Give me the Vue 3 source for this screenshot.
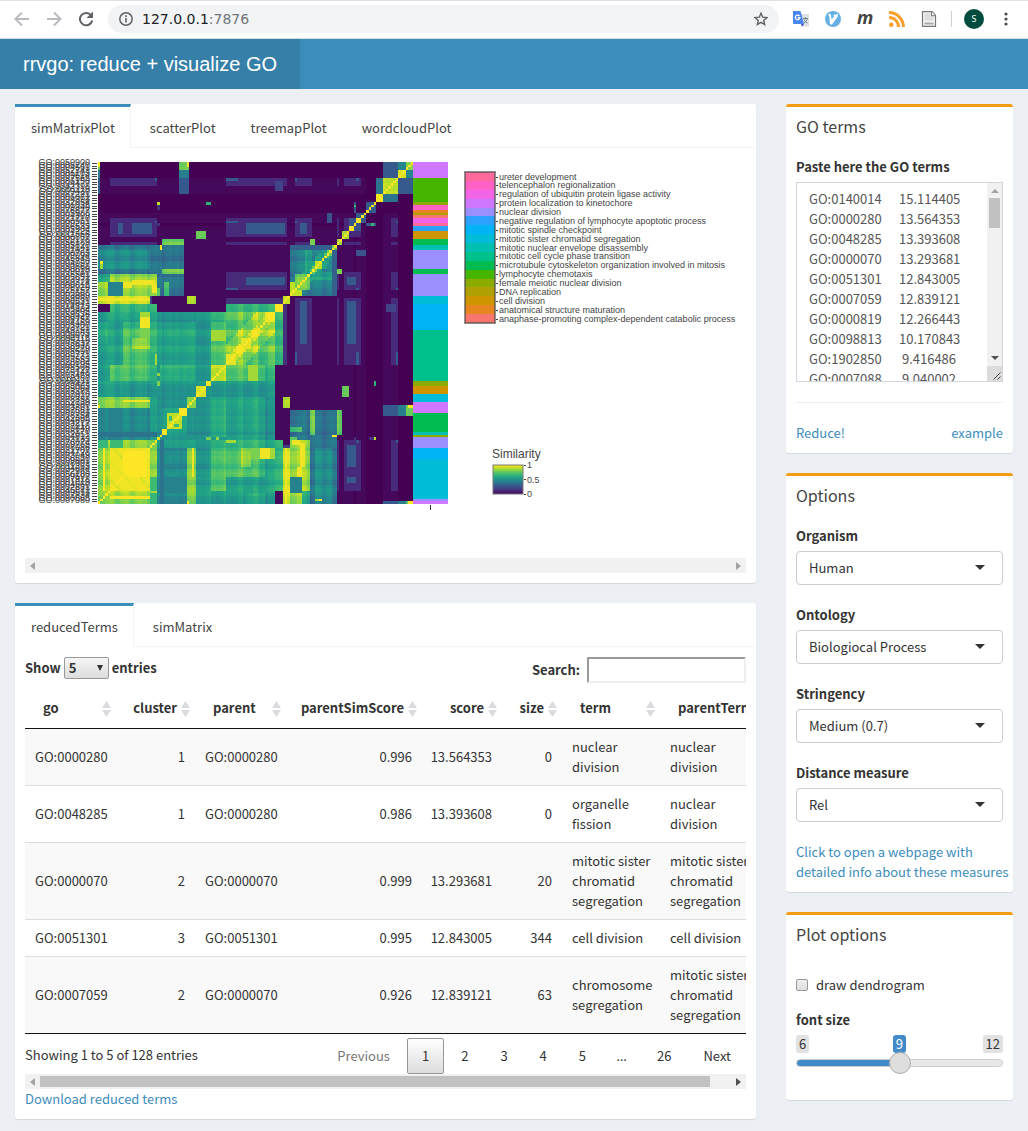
<script setup>
import { ref } from 'vue'

const plotTabs = ['simMatrixPlot', 'scatterPlot', 'treemapPlot', 'wordcloudPlot']
const tableTabs = ['reducedTerms', 'simMatrix']

const goText = ref(
  [
    'GO:0140014\t15.114405',
    'GO:0000280\t13.564353',
    'GO:0048285\t13.393608',
    'GO:0000070\t13.293681',
    'GO:0051301\t12.843005',
    'GO:0007059\t12.839121',
    'GO:0000819\t12.266443',
    'GO:0098813\t10.170843',
    'GO:1902850\t 9.416486',
    'GO:0007088\t 9.040002',
  ].join('\n')
)

const options = [
  { id: 'organism', label: 'Organism', value: 'Human' },
  { id: 'ontology', label: 'Ontology', value: 'Biologiocal Process' },
  { id: 'stringency', label: 'Stringency', value: 'Medium (0.7)' },
  { id: 'distance', label: 'Distance measure', value: 'Rel' },
]

const fontSize = ref(9)
const dendrogram = ref(false)

const columns = [
  { key: 'go', w: 91 },
  { key: 'cluster', w: 79, num: true },
  { key: 'parent', w: 91 },
  { key: 'parentSimScore', w: 136, num: true },
  { key: 'score', w: 80, num: true },
  { key: 'size', w: 60, num: true },
  { key: 'term', w: 98 },
  { key: 'parentTerm', w: 109 },
]
const rows = [
  ['GO:0000280', '1', 'GO:0000280', '0.996', '13.564353', '0', 'nuclear division', 'nuclear division'],
  ['GO:0048285', '1', 'GO:0000280', '0.986', '13.393608', '0', 'organelle fission', 'nuclear division'],
  ['GO:0000070', '2', 'GO:0000070', '0.999', '13.293681', '20', 'mitotic sister chromatid segregation', 'mitotic sister chromatid segregation'],
  ['GO:0051301', '3', 'GO:0051301', '0.995', '12.843005', '344', 'cell division', 'cell division'],
  ['GO:0007059', '2', 'GO:0000070', '0.926', '12.839121', '63', 'chromosome segregation', 'mitotic sister chromatid segregation'],
]
const pages = ['Previous', '1', '2', '3', '4', '5', '…', '26', 'Next']

const legend = [
  ['ureter development', '#ff699c'],
  ['telencephalon regionalization', '#ff61c7'],
  ['regulation of ubiquitin protein ligase activity', '#f265e7'],
  ['protein localization to kinetochore', '#cf78ff'],
  ['nuclear division', '#9b8eff'],
  ['negative regulation of lymphocyte apoptotic process', '#2ca1ff'],
  ['mitotic spindle checkpoint', '#00b3f4'],
  ['mitotic sister chromatid segregation', '#00bcd8'],
  ['mitotic nuclear envelope disassembly', '#00c0b2'],
  ['mitotic cell cycle phase transition', '#00c08b'],
  ['microtubule cytoskeleton organization involved in mitosis', '#00bc51'],
  ['lymphocyte chemotaxis', '#45b500'],
  ['female meiotic nuclear division', '#8bab00'],
  ['DNA replication', '#afa100'],
  ['cell division', '#ce9500'],
  ['anatomical structure maturation', '#e88523'],
  ['anaphase-promoting complex-dependent catabolic process', '#f8766d'],
]

/* Cluster annotation: [first row from the top, legend index] */
const clusters = [
  [0, 3], [6, 11], [15, 12], [16, 1], [18, 15], [19, 13], [20, 16], [21, 2], [23, 0], [24, 5],
  [26, 14], [29, 10], [31, 8], [33, 4], [40, 10], [42, 4], [50, 7], [53, 6], [63, 9], [82, 12],
  [84, 14], [87, 7], [90, 3], [94, 10], [101, 8], [102, 12], [103, 4], [107, 6], [111, 7],
  [126, 4], [127, 3],
].map(([y, k], i, all) => ({ y, h: (all[i + 1]?.[0] ?? 128) - y, fill: legend[k][1] }))

/* Similarity matrix, 128 x 128, symmetric; index 0 is the bottom left corner */
const N = 128
const stops = [
  [68, 1, 84], [72, 36, 117], [65, 68, 135], [53, 95, 141], [42, 120, 142], [33, 145, 140],
  [34, 168, 132], [68, 191, 112], [122, 209, 81], [189, 223, 38], [253, 231, 37],
]
function viridis(v) {
  const t = Math.min(0.9999, Math.max(0, v)) * 10
  const i = Math.floor(t)
  return 'rgb(' + stops[i].map((a, k) => Math.round(a + (stops[i + 1][k] - a) * (t - i))) + ')'
}
const m = Array.from({ length: N }, () => new Array(N).fill(0))
function fill(a0, a1, b0, b1, v) {
  for (let a = a0; a < a1; a++)
    for (let b = b0; b < b1; b++) {
      const x = typeof v === 'function' ? v(a, b) : v
      m[a][b] = x
      m[b][a] = x
    }
}
const wave = k => (((k * 7919) % 13) / 13 - 0.5) * 0.07 + (Math.floor(k / 3) % 2 ? 0.02 : -0.01)
const tex = v => (a, b) => v + wave(a) + wave(b)

fill(0, 109, 0, 109, 0.025)
fill(116, 122, 0, 109, 0.025)
fill(104, 105, 0, 109, 0)
for (const [a, b] of [[5, 24], [52, 77], [80, 87], [97, 98], [100, 107]]) {
  fill(a, b, 119, 122, 0.11)
  fill(a, b, 100, 107, 0.11)
  fill(a, b, 97, 98, 0.11)
}
fill(52, 77, 80, 87, 0.12)
fill(52, 75, 75, 77, 0.14)
fill(60, 76, 101, 105, 0.29)
fill(60, 76, 82, 85, 0.29)
fill(82, 85, 101, 105, 0.29)
fill(8, 10, 101, 105, 0.27)
fill(14, 22, 101, 105, 0.29)
for (const a of [80, 105, 121]) fill(52, 57, a, a + 1, 0.29)
fill(80, 81, 105, 106, 0.29)
fill(80, 81, 121, 122, 0.29)
fill(105, 106, 121, 122, 0.29)
fill(23, 24, 105, 106, 0.25)
fill(23, 24, 121, 122, 0.3)
fill(72, 75, 117, 121, 0.2)

/* large mitotic block */
const level = k =>
  k < 5 ? 0.58 : k < 21 ? 0.66 : k < 24 ? 0.64 : k < 36 ? 0.5 : k < 40 ? 0.55 :
  k < 46 ? 0.48 : k < 52 ? 0.66 : k < 60 ? 0.67 : k < 68 ? 0.72 : k < 72 ? 0.5 : 0.6
fill(0, 72, 0, 72, (a, b) => (level(a) + level(b)) / 2 - 0.03 + wave(a) + wave(b))
fill(5, 24, 72, 75, tex(0.68))
fill(52, 72, 72, 75, tex(0.68))
fill(5, 21, 46, 66, tex(0.71))
fill(8, 10, 58, 72, tex(0.78))
fill(14, 21, 58, 62, tex(0.84))
fill(17, 21, 66, 70, 0.98)
fill(17, 21, 70, 72, 0.86)
fill(17, 21, 62, 66, 0.8)
fill(0, 5, 24, 60, tex(0.55))
fill(5, 10, 24, 31, 0.45)
fill(0, 21, 0, 21, tex(0.86))
fill(5, 21, 5, 21, (a, b) => 0.97 + wave(a + b) / 2)
fill(12, 20, 10, 20, 0.99)
fill(0, 21, 0, 4, tex(0.84))
fill(10, 13, 2, 3, 1)
fill(15, 21, 2, 3, 1)
fill(2, 3, 5, 21, 1)
fill(21, 24, 0, 21, tex(0.82))
fill(21, 24, 5, 10, 0.68)
fill(21, 24, 0, 4, 0.66)
fill(21, 24, 21, 24, 0.8)
fill(24, 36, 0, 21, tex(0.47))
fill(24, 36, 4, 10, 0.43)
fill(25, 27, 0, 24, 0.38)
fill(36, 40, 0, 21, tex(0.82))
fill(38, 39, 10, 21, 0.98)
fill(46, 52, 21, 72, tex(0.62))
fill(40, 46, 10, 72, tex(0.51))
fill(52, 72, 4, 10, tex(0.56))
fill(24, 25, 42, 52, 0.52)
fill(24, 46, 24, 46, tex(0.5))
fill(26, 35, 26, 36, tex(0.58))
fill(28, 34, 28, 34, tex(0.9))
fill(29, 30, 31, 33, 0.68)
fill(26, 28, 26, 28, 1)
fill(33, 36, 33, 36, 1)
fill(36, 40, 36, 40, 0.82)
fill(40, 44, 40, 44, tex(0.95))
fill(44, 46, 44, 46, 1)
fill(46, 52, 46, 52, tex(0.9))
fill(46, 52, 52, 60, tex(0.72))
fill(46, 58, 58, 68, tex(0.72))
fill(46, 52, 61, 65, 0.86)
fill(52, 72, 52, 72, (a, b) => {
  const d = Math.abs(a - b)
  return (d < 3 ? 0.92 : d < 8 ? 0.82 : 0.71) + wave(a) * 1.6 + wave(b) * 1.6
})
fill(52, 56, 52, 56, 0.96)
fill(58, 62, 58, 62, 0.96)
fill(68, 72, 68, 72, tex(0.95))
fill(72, 75, 72, 75, 1)
fill(24, 25, 48, 49, 0.84)
fill(44, 46, 24, 25, 0.8)
fill(0, 1, 36, 37, 0.97)
fill(52, 56, 23, 24, 0.85)

/* side block around index 75 to 97 */
fill(0, 21, 75, 78, tex(0.9))
fill(0, 21, 76, 77, 0.97)
fill(21, 22, 75, 78, 0.18)
fill(36, 40, 75, 78, tex(0.85))
fill(75, 78, 75, 78, tex(0.85))
fill(0, 35, 78, 97, tex(0.38))
fill(0, 21, 88, 95, tex(0.49))
fill(5, 24, 83, 86, tex(0.84))
fill(0, 5, 83, 86, tex(0.6))
fill(0, 24, 78, 83, tex(0.86))
fill(4, 10, 78, 83, 0.44)
fill(10, 14, 81, 83, 0.97)
fill(14, 23, 82, 84, 0.98)
fill(22, 24, 79, 82, 0.98)
fill(1, 2, 90, 91, 1)
fill(1, 2, 88, 90, 0.84)
fill(24, 25, 78, 81, 0.74)
fill(27, 29, 78, 83, tex(0.7))
fill(25, 26, 95, 97, 1)
fill(26, 35, 86, 88, tex(0.8))
fill(26, 35, 97, 99, tex(0.78))
fill(78, 97, 78, 97, (a, b) => {
  const d = Math.abs(a - b)
  return (d < 2 ? 0.75 : d < 4 ? 0.56 : 0.43) + wave(a) + wave(b)
})
fill(84, 86, 84, 95, tex(0.58))
fill(88, 95, 84, 87, tex(0.58))
fill(88, 92, 88, 93, tex(0.6))
fill(78, 80, 78, 83, 0.9)
fill(80, 86, 80, 86, tex(0.78))
fill(88, 91, 88, 91, 0.9)
fill(95, 97, 78, 95, 0.3)
fill(86, 88, 97, 99, 0.8)

/* small clusters on the upper diagonal */
fill(97, 99, 97, 99, 0.84)
fill(99, 102, 99, 102, 0.86)
fill(40, 44, 99, 102, tex(0.76))
fill(102, 107, 102, 105, 0.25)
fill(102, 104, 102, 104, 1)
fill(105, 109, 105, 109, 0.27)
fill(105, 107, 105, 107, 0.97)
fill(93, 95, 105, 109, 0.25)
fill(109, 113, 109, 113, 0.27)
fill(104, 105, 109, 113, 0.27)
fill(104, 105, 111, 112, 0.66)
fill(24, 25, 112, 113, 0.9)
fill(24, 25, 110, 112, 0.14)
fill(24, 25, 104, 105, 0.14)
fill(44, 46, 112, 113, 0.64)
fill(113, 116, 113, 116, 1)
fill(113, 116, 116, 122, 0.38)
fill(116, 122, 116, 122, tex(0.9))
fill(116, 122, 122, 128, 0.27)
fill(122, 125, 125, 128, 0.46)
fill(122, 125, 122, 125, 0.94)
fill(125, 128, 125, 128, 0.82)
for (const [a, b] of [[33, 37], [0, 1]]) {
  fill(a, b, 125, 128, tex(0.78))
  fill(a, b, 122, 125, 0.42)
  fill(a, b, 116, 122, 0.27)
}
fill(0, 1, 126, 128, 1)
fill(36, 37, 126, 128, 1)
for (let i = 0; i < N; i++) m[i][i] = 1

/* one path per shade, cells joined into horizontal runs */
const shades = new Map()
for (let b = 0; b < N; b++) {
  let start = 0
  for (let a = 1; a <= N; a++) {
    const q = Math.round(m[start][b] * 50)
    if (a === N || Math.round(m[a][b] * 50) !== q) {
      shades.set(q, (shades.get(q) || '') + `M${start} ${N - 1 - b}h${a - start}v1h${start - a}z`)
      start = a
    }
  }
}
const heat = [...shades].map(([q, d]) => ({ d, fill: viridis(q / 50) }))

const tickLabels = Array.from({ length: N }, (_, i) => {
  const n = i === 0 ? 50900 : i === N - 1 ? 7080 : (i * 48271 + 7919) % (i % 3 ? 9990 : 99990)
  return { y: 6 + Math.round((i * 341) / N), text: 'GO:' + String(n).padStart(7, '0') }
})
</script>

<template>
  <div class="page">
    <nav class="browser">
      <button class="ico" aria-label="Back">
        <svg width="16" height="16" viewBox="0 0 16 16" fill="none" stroke="#b9bbbe" stroke-width="2"><path d="M15 8H2M8 1.500L1.500 8L8 14.500" /></svg>
      </button>
      <button class="ico" aria-label="Forward">
        <svg width="16" height="16" viewBox="0 0 16 16" fill="none" stroke="#b9bbbe" stroke-width="2"><path d="M1 8H14M8 1.500L14.500 8L8 14.500" /></svg>
      </button>
      <button class="ico" aria-label="Reload">
        <svg width="16" height="16" viewBox="0 0 16 16"><path d="M13.200 4.500A6.200 6.200 0 1 0 14.200 9.500" fill="none" stroke="#5f6368" stroke-width="2" /><path d="M15 .5V7H8.500z" fill="#5f6368" /></svg>
      </button>
      <div class="address">
        <svg width="14" height="14" viewBox="0 0 14 14"><circle cx="7" cy="7" r="6.200" fill="none" stroke="#5f6368" stroke-width="1.500" /><path d="M6.200 6h1.600v4.500H6.200zM6.200 3.300h1.600v1.600H6.200z" fill="#5f6368" /></svg>
        <span class="url">127.0.0.1<i>:7876</i></span>
        <svg width="14" height="14" viewBox="0 0 14 14"><path d="M7 1.200l1.700 4 4.300.4-3.300 2.800 1 4.200L7 10.400l-3.700 2.200 1-4.200L1 5.600l4.300-.4z" fill="none" stroke="#5f6368" stroke-width="1.400" /></svg>
      </div>
      <div class="exts">
        <svg width="16" height="16" viewBox="0 0 16 16"><path d="M6 3h10v12.500H9z" fill="#dcdfe3" /><path d="M0 0h7.500L11 13H1a1 1 0 0 1-1-1z" fill="#4a86f0" /><path d="M8 13h3L9 15.800z" fill="#3a4fbf" /><path d="M6.500 5A2.300 2.300 0 1 0 6.900 6.700H4.800" fill="none" stroke="#fff" stroke-width="1.300" /><path d="M10 7.500h5M12.500 6.300v1.200M14 8c-.5 2-2 3.500-3 4M11 8.500c.6 1.500 2 3 3.500 3.500" fill="none" stroke="#6b7f86" /></svg>
        <svg width="16" height="16" viewBox="0 0 16 16"><circle cx="8" cy="8" r="8" fill="#66b1e4" /><path d="M3 3.500L5.500 2.500 6.700 8.500 9 5.500 8.500 4l4.500-1-.5 3L7 13.500H5L4.300 5.500z" fill="#fff" /></svg>
        <span class="ext-m">m</span>
        <svg width="16" height="16" viewBox="0 0 16 16"><circle cx="2.300" cy="13.700" r="2.200" fill="#fb9f2b" /><path d="M0 6.500A9.500 9.500 0 0 1 9.500 16M0 1.600A14.400 14.400 0 0 1 14.400 16" fill="none" stroke="#fb9f2b" stroke-width="3" /></svg>
        <svg width="16" height="16" viewBox="0 0 16 16"><path d="M1.500.7H11l3.500 3.500v11.100h-13z" fill="#f4f4f4" stroke="#777" stroke-width="1.200" /><path d="M3.500 2.500h6l3 3v4h-9z" fill="#ddd" /><path d="M3.500 11.500h9v2h-9z" fill="#aaa" /><path d="M10.500.7v4h4" fill="#fff" stroke="#777" /></svg>
        <span class="sep"></span>
        <span class="avatar">s</span>
        <svg width="4" height="14" viewBox="0 0 4 14" fill="#4a4d51"><circle cx="2" cy="2" r="1.600" /><circle cx="2" cy="7" r="1.600" /><circle cx="2" cy="12" r="1.600" /></svg>
      </div>
    </nav>

    <header class="header"><h1 class="logo">rrvgo: reduce + visualize GO</h1></header>

    <main class="content">
      <div class="col">
        <section class="box tabbed">
          <div class="tabs">
            <button v-for="(t, i) in plotTabs" :key="t" class="tab" :class="{ active: i === 0 }">{{ t }}</button>
          </div>
          <div class="tab-body">
            <div class="plot">
              <svg width="721" height="400" viewBox="0 0 721 400">
                <g class="small">
                  <g v-for="(t, i) in tickLabels" :key="i">
                    <text x="65" :y="t.y + 1" text-anchor="end">{{ t.text }}</text>
                    <rect x="67" :y="t.y - 1" width="5" height="1" />
                  </g>
                </g>
                <svg x="73" y="4" width="315" height="342" viewBox="0 0 128 128" preserveAspectRatio="none" shape-rendering="crispEdges">
                  <path v-for="p in heat" :key="p.fill" :d="p.d" :fill="p.fill" />
                </svg>
                <svg x="388" y="4" width="35" height="342" viewBox="0 0 1 128" preserveAspectRatio="none" shape-rendering="crispEdges">
                  <rect v-for="c in clusters" :key="c.y" x="0" :y="c.y" width="1" :height="c.h" :fill="c.fill" />
                </svg>
                <rect x="405" y="347" width="1" height="5" fill="#333" />

                <svg x="440" y="14" width="30" height="151" viewBox="0 0 1 17" preserveAspectRatio="none" shape-rendering="crispEdges">
                  <rect v-for="(l, i) in legend" :key="i" x="0" :y="i" width="1" height="1" :fill="l[1]" />
                </svg>
                <rect x="440" y="14" width="30" height="151" fill="none" stroke="#444" stroke-opacity="0.6" stroke-width="2" />
                <g class="small">
                  <g v-for="(l, i) in legend" :key="i">
                    <text x="474" :y="22 + Math.floor(i * 8.88)">{{ l[0] }}</text>
                    <rect x="471" :y="19 + Math.floor(i * 8.88)" width="2" height="1" />
                  </g>
                </g>

                <defs>
                  <linearGradient id="sim" x1="0" y1="1" x2="0" y2="0">
                    <stop v-for="k in 11" :key="k" :offset="(k - 1) / 10" :stop-color="viridis((k - 1) / 10)" />
                  </linearGradient>
                </defs>
                <text x="467" y="300" class="sim-title">Similarity</text>
                <rect x="468" y="307" width="30" height="29" fill="url(#sim)" stroke="#777" stroke-width="1" />
                <g class="small">
                  <rect x="499" y="307" width="2" height="1" /><text x="502" y="310">1</text>
                  <rect x="499" y="321" width="2" height="1" /><text x="502" y="325">0.5</text>
                  <rect x="499" y="336" width="2" height="1" /><text x="502" y="339">0</text>
                </g>
              </svg>
            </div>
            <div class="hbar off"><i class="arr left"></i><i class="arr right"></i></div>
          </div>
        </section>

        <section class="box tabbed">
          <div class="tabs">
            <button v-for="(t, i) in tableTabs" :key="t" class="tab" :class="{ active: i === 0 }">{{ t }}</button>
          </div>
          <div class="tab-body">
            <div class="controls">
              <label class="length">Show
                <span class="len-wrap"><select class="len"><option>5</option><option>10</option></select></span>
                entries</label>
              <label class="search">Search:<input type="search" /></label>
            </div>
            <div class="scroll">
              <table>
                <colgroup><col v-for="c in columns" :key="c.key" :style="{ width: c.w + 'px' }" /></colgroup>
                <thead>
                  <tr>
                    <th v-for="c in columns" :key="c.key" :class="{ num: c.num }">
                      {{ c.key }}
                      <svg v-if="c.key !== 'parentTerm'" class="sort" width="9" height="16" viewBox="0 0 9 16" fill="#d9dbde"><path d="M4.500 0L9 7H0zM0 9h9L4.500 16z" /></svg>
                    </th>
                  </tr>
                </thead>
                <tbody>
                  <tr v-for="r in rows" :key="r[0]">
                    <td v-for="(v, i) in r" :key="i" :class="{ num: columns[i].num }">{{ v }}</td>
                  </tr>
                </tbody>
              </table>
            </div>
            <div class="foot">
              <span>Showing 1 to 5 of 128 entries</span>
              <div class="pager">
                <template v-for="p in pages" :key="p">
                  <span v-if="p === '…'" class="pg dots">{{ p }}</span>
                  <button v-else class="pg" :class="{ current: p === '1', disabled: p === 'Previous' }">{{ p }}</button>
                </template>
              </div>
            </div>
            <div class="hbar"><i class="arr left"></i><i class="thumb"></i><i class="arr right dark"></i></div>
            <a href="#" class="download">Download reduced terms</a>
          </div>
        </section>
      </div>

      <aside class="col">
        <section class="box side">
          <h3>GO terms</h3>
          <div class="side-body">
            <label for="goterms">Paste here the GO terms</label>
            <div class="area">
              <textarea id="goterms" v-model="goText"></textarea>
              <div class="vbar">
                <i class="arr up"></i><i class="vthumb"></i><i class="arr down"></i>
                <svg width="15" height="15" viewBox="0 0 15 15"><rect width="15" height="15" fill="#dcdcdc" /><path d="M6.500 13.500l7-7M10.500 13.500l3-3" stroke="#444" /></svg>
              </div>
            </div>
            <hr />
            <div class="links"><a href="#">Reduce!</a><a href="#">example</a></div>
          </div>
        </section>

        <section class="box side">
          <h3>Options</h3>
          <div class="side-body">
            <div v-for="o in options" :key="o.id" class="group">
              <label :for="o.id">{{ o.label }}</label>
              <div class="pick"><select :id="o.id"><option>{{ o.value }}</option></select></div>
            </div>
            <a href="#" class="info">Click to open a webpage with<br />detailed info about these measures</a>
          </div>
        </section>

        <section class="box side">
          <h3>Plot options</h3>
          <div class="side-body plot-options">
            <label class="check"><input v-model="dendrogram" type="checkbox" />draw dendrogram</label>
            <label for="fs">font size</label>
            <div class="marks"><span>6</span><span class="now">{{ fontSize }}</span><span>12</span></div>
            <input id="fs" v-model="fontSize" class="range" type="range" min="6" max="12" />
          </div>
        </section>
      </aside>
    </main>
  </div>
</template>

<style>
body {
  background: #ecf0f5;
}
</style>

<style scoped>
.page,
.page * {
  box-sizing: border-box;
}
.page {
  font: 13px/20px "Noto Sans CJK SC", sans-serif;
  color: #333;
  background: #ecf0f5;
}
button,
input,
select,
textarea {
  font: inherit;
  color: inherit;
  margin: 0;
}
button {
  border: 0;
  padding: 0;
  background: none;
}
a {
  color: #3c8dbc;
  text-decoration: none;
}

/* browser bar */
.browser {
  display: flex;
  align-items: center;
  height: 39px;
  padding: 0 20px 2px 14px;
  background: #fff;
  border-top: 1px solid #dee1e6;
  border-bottom: 1px solid #dcdee0;
}
.ico {
  display: flex;
  margin-right: 16px;
}
.address {
  display: flex;
  flex: 1;
  align-items: center;
  height: 28px;
  margin-left: -2px;
  padding: 0 11px;
  border-radius: 14px;
  background: #f1f3f4;
}
.url {
  flex: 1;
  margin-left: 9px;
  font: 14px/20px "DejaVu Sans", sans-serif;
  color: #202124;
}
.url i {
  font-style: normal;
  color: #70757a;
}
.exts {
  display: flex;
  align-items: center;
  gap: 16px;
  margin-left: 14px;
}
.ext-m {
  width: 16px;
  padding-bottom: 4px;
  color: #444;
  font: italic bold 18px/16px "Open Sans", sans-serif;
}
.sep {
  width: 1px;
  height: 16px;
  margin: 0 -4px 0 -2px;
  background: #cdcfd2;
}
.avatar {
  width: 20px;
  height: 20px;
  margin-right: 4px;
  border-radius: 50%;
  background: #004d40;
  color: #fff;
  font: 9px/20px "Noto Sans", sans-serif;
  text-align: center;
  text-transform: uppercase;
}

.header {
  background: #3c8dbc;
}
.logo {
  width: 300px;
  margin: 0;
  background: #367fa9;
  color: #fff;
  font: 20px/50px "Liberation Sans", sans-serif;
  text-align: center;
}

.content {
  display: grid;
  grid-template-columns: minmax(0, 3fr) minmax(0, 1fr);
  padding-top: 15px;
}
.col {
  padding: 0 15px;
}
.box {
  background: #fff;
  border-radius: 3px;
  box-shadow: 0 1px 1px rgba(0, 0, 0, 0.1);
}
.tabbed {
  margin-bottom: 20px;
}
.col:first-child .tabbed:last-child {
  margin-bottom: 12px;
}
.tabs {
  display: flex;
  gap: 3px;
  border-bottom: 1px solid #f4f4f4;
}
.tab {
  height: 43px;
  padding: 2px 15px 0;
  border: solid transparent;
  border-width: 3px 1px 0;
  color: #444;
}
.tab.active {
  height: 44px;
  margin-bottom: -1px;
  padding-bottom: 1px;
  border-top-color: #3c8dbc;
  border-left-width: 0;
  padding-left: 16px;
  border-right-color: #f4f4f4;
  background: #fff;
}
.tab-body {
  padding: 10px;
}

/* plot */
.plot {
  overflow: hidden;
}
.plot svg {
  display: block;
}
.small {
  font: 9px "Liberation Sans", sans-serif;
  fill: #444;
}
.sim-title {
  font: 12px "Liberation Sans", sans-serif;
  fill: #444;
}

/* scroll bars */
.hbar {
  display: flex;
  align-items: center;
  justify-content: space-between;
  height: 15px;
  padding: 0 5px;
  background: #f1f1f1;
}
.arr {
  width: 0;
  height: 0;
  border: 4px solid transparent;
}
.left {
  border-left-width: 0;
  border-right: 5px solid #a3a3a3;
}
.right {
  border-right-width: 0;
  border-left: 5px solid #a3a3a3;
}
.right.dark {
  border-left-color: #505050;
}
.up {
  border-top-width: 0;
  border-bottom: 4px solid #a3a3a3;
}
.down {
  margin-top: auto;
  margin-bottom: 6px;
  border-bottom-width: 0;
  border-top: 4px solid #505050;
}
.thumb {
  flex: 1;
  height: 11px;
  margin: 0 26px 0 5px;
  background: #c1c1c1;
}

/* table */
.controls {
  display: flex;
  justify-content: space-between;
  align-items: flex-start;
  height: 31px;
  font-weight: bold;
}
.length {
  display: flex;
  align-items: center;
  gap: 3px;
}
.len-wrap {
  position: relative;
}
.len-wrap::after {
  content: "";
  position: absolute;
  right: 6px;
  top: 8px;
  border: 3px solid transparent;
  border-top: 6px solid #333;
  border-bottom: 0;
}
.len {
  display: block;
  width: 45px;
  height: 22px;
  padding: 0 4px;
  appearance: none;
  border: 1px solid #999;
  border-radius: 2px;
  background: linear-gradient(#f6f6f6, #dcdcdc);
  line-height: 20px;
}
.search {
  display: flex;
  align-items: center;
  gap: 7px;
}
.search input {
  width: 159px;
  height: 26px;
  border: 2px solid;
  border-color: #9a9a9a #eee #eee #9a9a9a;
  background: #fff;
  appearance: none;
}
.scroll {
  overflow: hidden;
}
table {
  width: 744px;
  table-layout: fixed;
  border-collapse: separate;
  border-spacing: 0;
  border-bottom: 1px solid #111;
}
th {
  position: relative;
  padding: 10px 0 10px 18px;
  border-bottom: 1px solid #111;
  text-align: left;
  white-space: nowrap;
}
th.num {
  padding: 10px 18px 10px 0;
}
td {
  padding: 8px 0 8px 10px;
}
td:last-child {
  padding-right: 18px;
}
.num {
  text-align: right;
}
td.num {
  padding: 8px 10px 8px 0;
}
tbody tr:nth-child(odd) {
  background: #f9f9f9;
}
tbody tr + tr td {
  border-top: 1px solid #ddd;
}
.sort {
  position: absolute;
  right: 5px;
  top: 13px;
}
.foot {
  display: flex;
  justify-content: space-between;
  padding-top: 4px;
  line-height: 34px;
}
.pager {
  display: flex;
  gap: 2px;
}
.pg {
  min-width: 37px;
  height: 36px;
  padding: 0 14px;
  border: 1px solid transparent;
  border-radius: 2px;
  text-align: center;
}
.dots {
  padding: 0 12px;
  font-family: "Noto Sans", sans-serif;
}
.current {
  border-color: #979797;
  background: linear-gradient(#fff, #dcdcdc);
}
.disabled {
  color: #777;
}
.download {
  display: block;
}

/* side boxes */
.side {
  margin-bottom: 20px;
  border-top: 3px solid #f39c12;
}
h3 {
  margin: 0;
  padding: 9px 10px 10px;
  font-size: 16px;
  font-weight: normal;
  line-height: 20px;
  color: #444;
}
.side-body {
  padding: 11px 10px 10px;
}
.side-body label {
  display: block;
  margin-bottom: 5px;
  font-weight: bold;
}
.area {
  position: relative;
}
textarea {
  display: block;
  width: 100%;
  height: 200px;
  padding: 6px 12px;
  overflow: hidden;
  resize: none;
  border: 1px solid #d2d6de;
  border-radius: 0;
  color: #555;
  white-space: pre;
  tab-size: 90px;
}
.vbar {
  position: absolute;
  inset: 1px 1px 1px auto;
  display: flex;
  flex-direction: column;
  align-items: center;
  width: 15px;
  padding-top: 6px;
  background: #f1f1f1;
}
.vthumb {
  width: 11px;
  height: 30px;
  margin-top: 5px;
  background: #c1c1c1;
}
hr {
  height: 1px;
  margin: 20px 0;
  border: 0;
  background: #eee;
}
.links {
  display: flex;
  justify-content: space-between;
}
.group {
  margin-bottom: 20px;
}
.pick {
  position: relative;
}
.pick::after {
  content: "";
  position: absolute;
  right: 18px;
  top: 14px;
  border: 5px solid transparent;
  border-top-color: #333;
  border-bottom: 0;
}
.pick select {
  display: block;
  width: 100%;
  height: 34px;
  padding: 0 12px;
  appearance: none;
  border: 1px solid #ccc;
  border-radius: 4px;
  background: #fff;
}
.info {
  display: block;
  margin-right: -10px;
}
.plot-options {
  padding-top: 21px;
  padding-bottom: 27px;
}
.side-body .check {
  display: flex;
  align-items: center;
  gap: 8px;
  margin-bottom: 15px;
  font-weight: normal;
}
.check input {
  appearance: none;
  width: 12px;
  height: 12px;
  border: 1px solid #999;
  border-radius: 2px;
  background: linear-gradient(#eee, #dedede);
}
.marks {
  display: flex;
  justify-content: space-between;
  line-height: 18px;
}
.marks span {
  padding: 0 3px;
  border-radius: 3px;
  background: #e1e1e1;
}
.marks .now {
  margin-left: 7px;
  background: #428bca;
  color: #fff;
}
.range {
  display: block;
  width: 100%;
  height: 20px;
  appearance: none;
  background: none;
}
.range::-webkit-slider-runnable-track {
  height: 8px;
  border: 1px solid #ccc;
  border-radius: 4px;
  background: linear-gradient(90deg, #428bca 50%, #e8e8e8 50%);
}
.range::-webkit-slider-thumb {
  appearance: none;
  width: 22px;
  height: 22px;
  margin-top: -8px;
  border: 1px solid #ababab;
  border-radius: 50%;
  background: #dedede;
  box-shadow: 1px 1px 3px rgba(255, 255, 255, 0.3);
}
</style>
